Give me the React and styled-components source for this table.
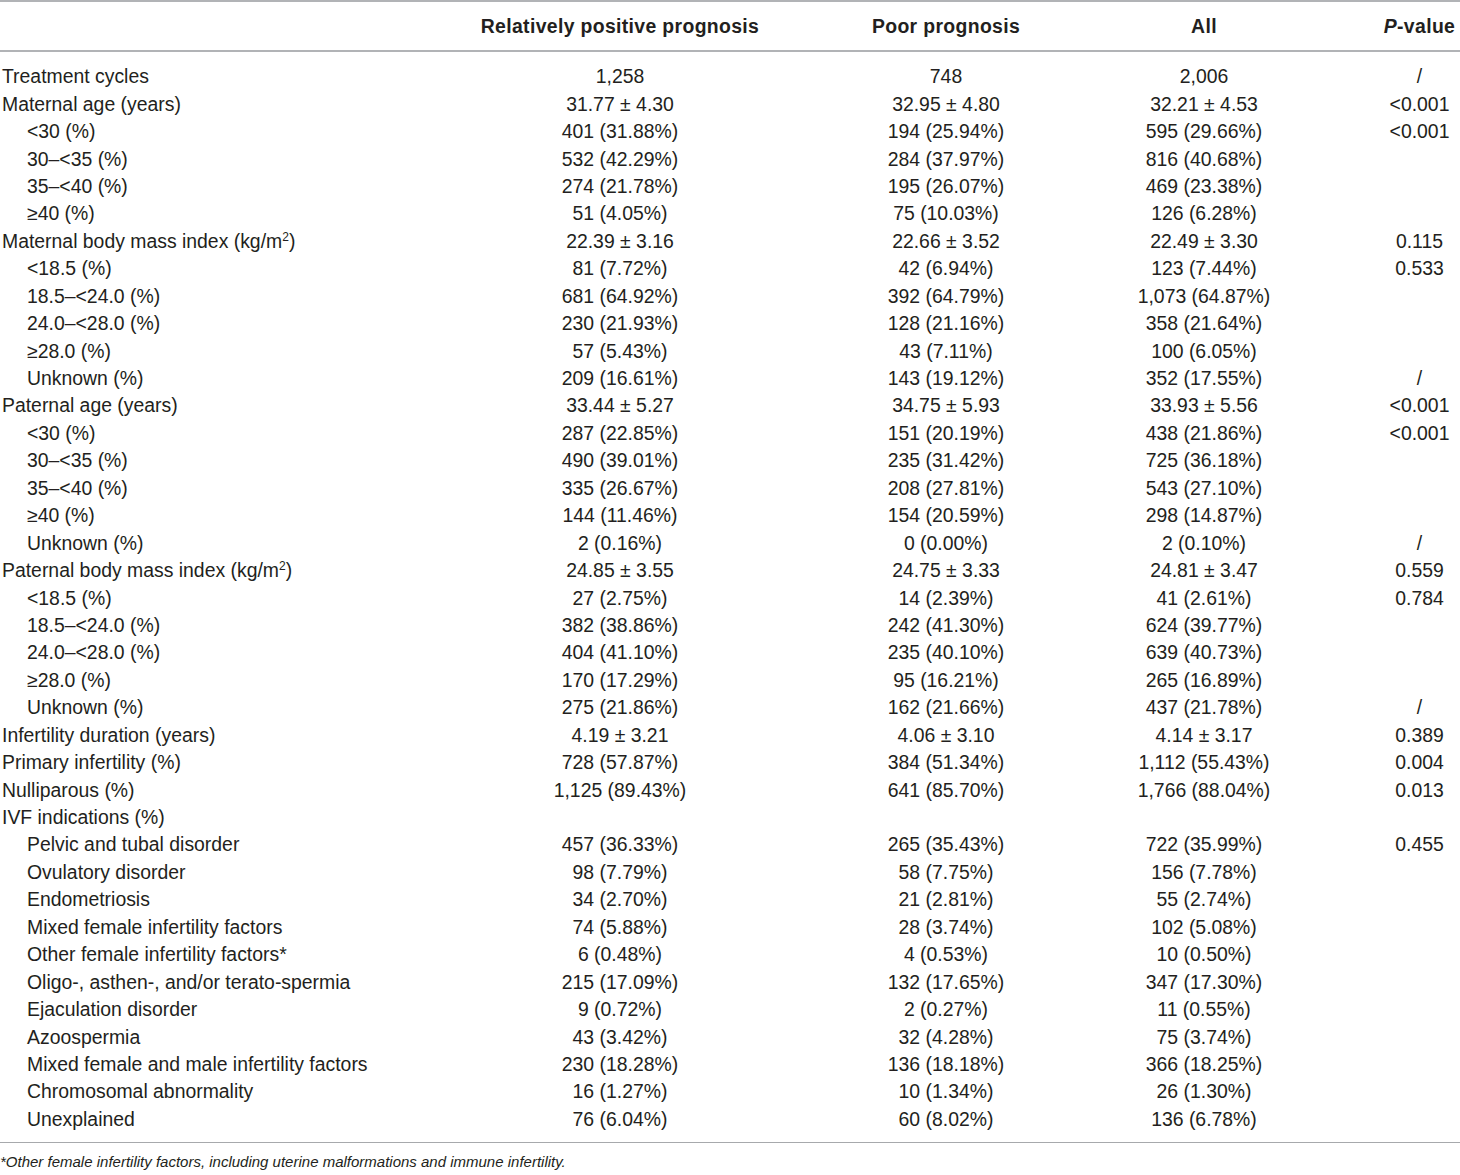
import styled, { createGlobalStyle } from "styled-components"

const GlobalStyle = createGlobalStyle`
  html, body {
    margin: 0;
    padding: 0;
    background: #ffffff;
  }
  body {
    font-family: "Liberation Sans", Arial, sans-serif;
    color: #231f20;
  }
`

const rows = [
  { label: "Treatment cycles", v: ["1,258", "748", "2,006", "/"] },
  { label: "Maternal age (years)", v: ["31.77 ± 4.30", "32.95 ± 4.80", "32.21 ± 4.53", "<0.001"] },
  { label: "<30 (%)", sub: true, v: ["401 (31.88%)", "194 (25.94%)", "595 (29.66%)", "<0.001"] },
  { label: "30–<35 (%)", sub: true, v: ["532 (42.29%)", "284 (37.97%)", "816 (40.68%)", ""] },
  { label: "35–<40 (%)", sub: true, v: ["274 (21.78%)", "195 (26.07%)", "469 (23.38%)", ""] },
  { label: "≥40 (%)", sub: true, v: ["51 (4.05%)", "75 (10.03%)", "126 (6.28%)", ""] },
  { label: "Maternal body mass index (kg/m", sup: "2", after: ")", v: ["22.39 ± 3.16", "22.66 ± 3.52", "22.49 ± 3.30", "0.115"] },
  { label: "<18.5 (%)", sub: true, v: ["81 (7.72%)", "42 (6.94%)", "123 (7.44%)", "0.533"] },
  { label: "18.5–<24.0 (%)", sub: true, v: ["681 (64.92%)", "392 (64.79%)", "1,073 (64.87%)", ""] },
  { label: "24.0–<28.0 (%)", sub: true, v: ["230 (21.93%)", "128 (21.16%)", "358 (21.64%)", ""] },
  { label: "≥28.0 (%)", sub: true, v: ["57 (5.43%)", "43 (7.11%)", "100 (6.05%)", ""] },
  { label: "Unknown (%)", sub: true, v: ["209 (16.61%)", "143 (19.12%)", "352 (17.55%)", "/"] },
  { label: "Paternal age (years)", v: ["33.44 ± 5.27", "34.75 ± 5.93", "33.93 ± 5.56", "<0.001"] },
  { label: "<30 (%)", sub: true, v: ["287 (22.85%)", "151 (20.19%)", "438 (21.86%)", "<0.001"] },
  { label: "30–<35 (%)", sub: true, v: ["490 (39.01%)", "235 (31.42%)", "725 (36.18%)", ""] },
  { label: "35–<40 (%)", sub: true, v: ["335 (26.67%)", "208 (27.81%)", "543 (27.10%)", ""] },
  { label: "≥40 (%)", sub: true, v: ["144 (11.46%)", "154 (20.59%)", "298 (14.87%)", ""] },
  { label: "Unknown (%)", sub: true, v: ["2 (0.16%)", "0 (0.00%)", "2 (0.10%)", "/"] },
  { label: "Paternal body mass index (kg/m", sup: "2", after: ")", v: ["24.85 ± 3.55", "24.75 ± 3.33", "24.81 ± 3.47", "0.559"] },
  { label: "<18.5 (%)", sub: true, v: ["27 (2.75%)", "14 (2.39%)", "41 (2.61%)", "0.784"] },
  { label: "18.5–<24.0 (%)", sub: true, v: ["382 (38.86%)", "242 (41.30%)", "624 (39.77%)", ""] },
  { label: "24.0–<28.0 (%)", sub: true, v: ["404 (41.10%)", "235 (40.10%)", "639 (40.73%)", ""] },
  { label: "≥28.0 (%)", sub: true, v: ["170 (17.29%)", "95 (16.21%)", "265 (16.89%)", ""] },
  { label: "Unknown (%)", sub: true, v: ["275 (21.86%)", "162 (21.66%)", "437 (21.78%)", "/"] },
  { label: "Infertility duration (years)", v: ["4.19 ± 3.21", "4.06 ± 3.10", "4.14 ± 3.17", "0.389"] },
  { label: "Primary infertility (%)", v: ["728 (57.87%)", "384 (51.34%)", "1,112 (55.43%)", "0.004"] },
  { label: "Nulliparous (%)", v: ["1,125 (89.43%)", "641 (85.70%)", "1,766 (88.04%)", "0.013"] },
  { label: "IVF indications (%)", v: ["", "", "", ""] },
  { label: "Pelvic and tubal disorder", sub: true, v: ["457 (36.33%)", "265 (35.43%)", "722 (35.99%)", "0.455"] },
  { label: "Ovulatory disorder", sub: true, v: ["98 (7.79%)", "58 (7.75%)", "156 (7.78%)", ""] },
  { label: "Endometriosis", sub: true, v: ["34 (2.70%)", "21 (2.81%)", "55 (2.74%)", ""] },
  { label: "Mixed female infertility factors", sub: true, v: ["74 (5.88%)", "28 (3.74%)", "102 (5.08%)", ""] },
  { label: "Other female infertility factors*", sub: true, v: ["6 (0.48%)", "4 (0.53%)", "10 (0.50%)", ""] },
  { label: "Oligo-, asthen-, and/or terato-spermia", sub: true, v: ["215 (17.09%)", "132 (17.65%)", "347 (17.30%)", ""] },
  { label: "Ejaculation disorder", sub: true, v: ["9 (0.72%)", "2 (0.27%)", "11 (0.55%)", ""] },
  { label: "Azoospermia", sub: true, v: ["43 (3.42%)", "32 (4.28%)", "75 (3.74%)", ""] },
  { label: "Mixed female and male infertility factors", sub: true, v: ["230 (18.28%)", "136 (18.18%)", "366 (18.25%)", ""] },
  { label: "Chromosomal abnormality", sub: true, v: ["16 (1.27%)", "10 (1.34%)", "26 (1.30%)", ""] },
  { label: "Unexplained", sub: true, v: ["76 (6.04%)", "60 (8.02%)", "136 (6.78%)", ""] },
]

const Page = styled.div`
  width: 1460px;
`

const Table = styled.div`
  border-top: 2px solid #b1b3b6;
  border-bottom: 1px solid #a7a9ac;
`

const Row = styled.div`
  display: grid;
  grid-template-columns: 457px 326px 326px 190px 1fr;
  align-items: center;
  font-size: 19.4px;
  height: ${(p) => (p.$head ? "48px" : "27.45px")};
  font-weight: ${(p) => (p.$head ? 700 : 400)};
  letter-spacing: ${(p) => (p.$head ? "0.35px" : "0")};
  border-bottom: ${(p) => (p.$head ? "2px solid #b1b3b6" : "none")};
`

const Body = styled.div`
  padding: 11px 0 9px;
`

const Label = styled.div`
  padding-left: ${(p) => (p.$sub ? "27px" : "2px")};
  white-space: nowrap;
`

const Cell = styled.div`
  text-align: center;
  white-space: nowrap;
`

const PCell = styled(Cell)`
  padding-left: 80px;
`

const Sup = styled.sup`
  font-size: 12px;
  line-height: 0;
  vertical-align: 7px;
`

const Note = styled.p`
  margin: 9px 0 0 0;
  font-size: 15px;
  line-height: 20px;
  font-style: italic;
`

export default function App() {
  return (
    <Page>
      <GlobalStyle />
      <Table>
        <Row $head>
          <Label></Label>
          <Cell>Relatively positive prognosis</Cell>
          <Cell>Poor prognosis</Cell>
          <Cell>All</Cell>
          <PCell><i>P</i>-value</PCell>
        </Row>
        <Body>
          {rows.map((r, i) => (
            <Row key={i}>
              <Label $sub={r.sub}>
                {r.label}
                {r.sup && <Sup>{r.sup}</Sup>}
                {r.after}
              </Label>
              <Cell>{r.v[0]}</Cell>
              <Cell>{r.v[1]}</Cell>
              <Cell>{r.v[2]}</Cell>
              <PCell>{r.v[3]}</PCell>
            </Row>
          ))}
        </Body>
      </Table>
      <Note>*Other female infertility factors, including uterine malformations and immune infertility.</Note>
    </Page>
  )
}
